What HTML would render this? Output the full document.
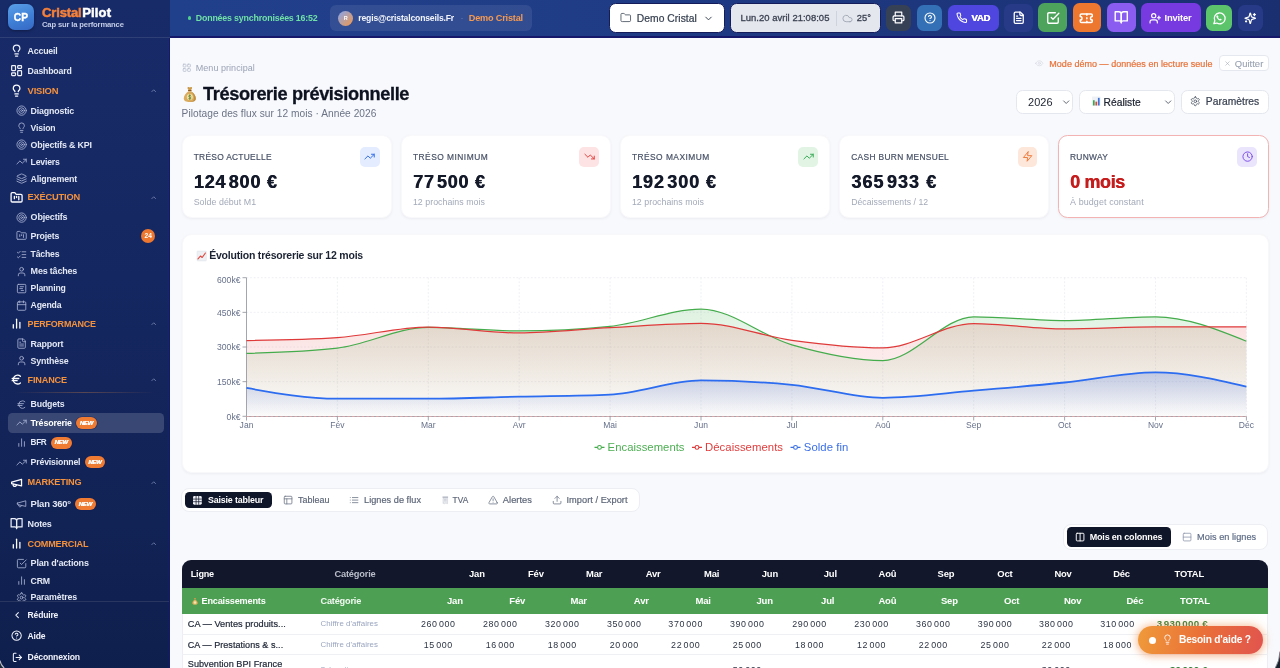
<!DOCTYPE html>
<html lang="fr"><head><meta charset="utf-8"><title>CristalPilot - Trésorerie prévisionnelle</title>
<style>
*{box-sizing:border-box;margin:0;padding:0}
html,body{width:1280px;height:668px;overflow:hidden;background:#f8f9fd;font-family:"Liberation Sans",sans-serif;}
#root{position:relative;width:1280px;height:668px;overflow:hidden;will-change:transform;}
.t{position:absolute;white-space:nowrap;display:block}
.i{position:absolute;display:block;overflow:visible}
.b{position:absolute}
</style></head><body><div id="root">
<div class="b" style="left:170.00px;top:0.00px;width:1110.00px;height:668.00px;background:#f8f9fd;"></div>
<div class="b" style="left:170.00px;top:0.00px;width:1110.00px;height:37.50px;background:linear-gradient(90deg,#21408c 0%,#1f3b85 45%,#1a2f70 100%);border-bottom:2px solid #15186b;"></div>
<div class="b" style="left:0.00px;top:0.00px;width:170.00px;height:668.00px;background:linear-gradient(180deg,#182b69 0%,#172a66 15%,#14265e 50%,#0f1f4d 100%);"></div>
<div class="b" style="left:0.00px;top:37.00px;width:170.00px;height:1.00px;background:rgba(255,255,255,.10);"></div>
<div class="b" style="left:169.30px;top:37.50px;width:0.90px;height:631.00px;background:#141a70;"></div>
<div class="b" style="left:7.50px;top:3.75px;width:26.50px;height:26.50px;border-radius:7px;background:linear-gradient(160deg,#5aa0e8 0%,#3f7fd6 55%,#3568c4 100%);box-shadow:0 1px 3px rgba(0,0,0,.35);"></div>
<span class="t" style="left:13.70px;top:3.00px;font-size:10.2px;line-height:30px;color:#ffffff;font-weight:700;letter-spacing:0.230px;-webkit-text-stroke:0.35px #fff;">CP</span>
<span class="t" style="left:42.00px;top:-3.00px;font-size:13px;line-height:30px;color:#f5813a;font-weight:700;letter-spacing:-0.143px;-webkit-text-stroke:0.5px #f5813a;transform:translateY(0.5px);">Cristal</span>
<span class="t" style="left:82.20px;top:-3.00px;font-size:13px;line-height:30px;color:#ffffff;font-weight:700;letter-spacing:0.159px;-webkit-text-stroke:0.5px #fff;transform:translateY(0.5px);">Pilot</span>
<span class="t" style="left:42.00px;top:10.00px;font-size:7.63px;line-height:30px;color:#c3cce6;font-weight:700;letter-spacing:-0.154px;">Cap sur la performance</span>
<div class="b" style="left:187.80px;top:16.20px;width:3.60px;height:3.60px;border-radius:50%;background:#4fd08b;"></div>
<span class="t" style="left:195.75px;top:3.00px;font-size:8.83px;line-height:30px;color:#6fe0a6;font-weight:700;letter-spacing:-0.177px;">Données synchronisées 16:52</span>
<div class="b" style="left:330.00px;top:5.00px;width:201.50px;height:25.50px;border-radius:6px;background:rgba(255,255,255,.085);"></div>
<div class="b" style="left:338.20px;top:10.50px;width:15.00px;height:15.00px;border-radius:50%;background:linear-gradient(135deg,#8fa4e0 10%,#e39a63 85%);"></div>
<span class="t" style="left:343.71px;top:3.00px;font-size:5.5px;line-height:30px;color:#ffffff;font-weight:700;">R</span>
<span class="t" style="left:358.30px;top:3.00px;font-size:8.62px;line-height:30px;color:#f1f4fb;font-weight:700;letter-spacing:-0.170px;">regis@cristalconseils.Fr</span>
<span class="t" style="left:460.50px;top:3.00px;font-size:9px;line-height:30px;color:#6f7fb5;">·</span>
<span class="t" style="left:468.80px;top:3.00px;font-size:9.13px;line-height:30px;color:#f59a52;font-weight:700;letter-spacing:-0.183px;">Demo Cristal</span>
<div class="b" style="left:608.80px;top:2.60px;width:116.00px;height:30.40px;border-radius:6.5px;background:#fff;border:1px solid #141c5a;"></div>
<svg class="i" style="left:619.50px;top:12.30px;" width="11.5" height="11.5" viewBox="0 0 24 24" fill="none" stroke="#4b5563" stroke-width="1.8" stroke-linecap="round" stroke-linejoin="round"><path d="M20 20a2 2 0 0 0 2-2V8a2 2 0 0 0-2-2h-7.900a2 2 0 0 1-1.690-.9L9.600 3.900A2 2 0 0 0 7.930 3H4a2 2 0 0 0-2 2v13a2 2 0 0 0 2 2Z"/></svg>
<span class="t" style="left:636.80px;top:4.00px;font-size:10.3px;line-height:30px;color:#374151;letter-spacing:0.044px;-webkit-text-stroke:0.22px #374151;">Demo Cristal</span>
<svg class="i" style="left:703.20px;top:12.80px;" width="11" height="11" viewBox="0 0 24 24" fill="none" stroke="#374151" stroke-width="2.1" stroke-linecap="round" stroke-linejoin="round"><path d="m6 9 6 6 6-6"/></svg>
<div class="b" style="left:730.20px;top:2.60px;width:151.00px;height:30.40px;border-radius:6.5px;background:#e5e7ee;border:1px solid #141c5a;"></div>
<span class="t" style="left:740.50px;top:3.00px;font-size:9.45px;line-height:30px;color:#3b4252;letter-spacing:0.037px;-webkit-text-stroke:0.3px #3b4252;">Lun.20 avril 21:08:05</span>
<div class="b" style="left:835.60px;top:10.50px;width:0.80px;height:15.00px;background:#cfd3dd;"></div>
<svg class="i" style="left:842.00px;top:12.60px;" width="11" height="11" viewBox="0 0 24 24" fill="none" stroke="#9aa1ae" stroke-width="1.8" stroke-linecap="round" stroke-linejoin="round"><path d="M17.500 19H9a7 7 0 1 1 6.710-9h1.790a4.500 4.500 0 1 1 0 9Z"/></svg>
<span class="t" style="left:856.80px;top:3.00px;font-size:9.34px;line-height:30px;color:#3b4252;letter-spacing:0.039px;-webkit-text-stroke:0.3px #3b4252;">25°</span>
<div class="b" style="left:885.50px;top:5.00px;width:25.50px;height:25.50px;border-radius:6.5px;background:#374155;"></div>
<svg class="i" style="left:891.70px;top:11.20px;" width="13" height="13" viewBox="0 0 24 24" fill="none" stroke="#fff" stroke-width="2.2" stroke-linecap="round" stroke-linejoin="round"><polyline points="6 9 6 2 18 2 18 9"/><path d="M6 18H4a2 2 0 0 1-2-2v-5a2 2 0 0 1 2-2h16a2 2 0 0 1 2 2v5a2 2 0 0 1-2 2h-2"/><rect width="12" height="8" x="6" y="14"/></svg>
<div class="b" style="left:916.80px;top:5.00px;width:25.70px;height:25.50px;border-radius:6.5px;background:#3470b6;"></div>
<svg class="i" style="left:923.60px;top:11.70px;" width="12" height="12" viewBox="0 0 24 24" fill="none" stroke="#fff" stroke-width="2.2" stroke-linecap="round" stroke-linejoin="round"><circle cx="12" cy="12" r="10"/><path d="M9.090 9a3 3 0 0 1 5.830 1c0 2-3 3-3 3"/><path d="M12 17h.01"/></svg>
<div class="b" style="left:948.00px;top:4.80px;width:50.80px;height:25.80px;border-radius:6.5px;background:#4f46e0;"></div>
<svg class="i" style="left:955.50px;top:12.00px;" width="11.5" height="11.5" viewBox="0 0 24 24" fill="none" stroke="#fff" stroke-width="2.2" stroke-linecap="round" stroke-linejoin="round"><path d="M22 16.920v3a2 2 0 0 1-2.180 2 19.790 19.790 0 0 1-8.630-3.070 19.500 19.500 0 0 1-6-6 19.790 19.790 0 0 1-3.070-8.670A2 2 0 0 1 4.110 2h3a2 2 0 0 1 2 1.720 12.840 12.840 0 0 0 .7 2.810 2 2 0 0 1-.45 2.110L8.090 9.910a16 16 0 0 0 6 6l1.270-1.270a2 2 0 0 1 2.110-.45 12.840 12.840 0 0 0 2.810.7A2 2 0 0 1 22 16.920z"/></svg>
<span class="t" style="left:971.30px;top:3.00px;font-size:9.51px;line-height:30px;color:#ffffff;font-weight:700;letter-spacing:-0.187px;text-shadow:0.4px 0 0 #fff;">VAD</span>
<div class="b" style="left:1004.20px;top:3.80px;width:28.40px;height:28.20px;border-radius:6.5px;background:#263a87;"></div>
<svg class="i" style="left:1011.60px;top:11.00px;" width="13.5" height="13.5" viewBox="0 0 24 24" fill="none" stroke="#fff" stroke-width="2.3" stroke-linecap="round" stroke-linejoin="round"><path d="M15 2H6a2 2 0 0 0-2 2v16a2 2 0 0 0 2 2h12a2 2 0 0 0 2-2V7Z"/><path d="M14 2v4a2 2 0 0 0 2 2h4"/><path d="M10 9H8"/><path d="M16 13H8"/><path d="M16 17H8"/></svg>
<div class="b" style="left:1038.20px;top:3.40px;width:28.80px;height:28.80px;border-radius:6.5px;background:#4ea35c;"></div>
<svg class="i" style="left:1045.60px;top:10.80px;" width="14" height="14" viewBox="0 0 24 24" fill="none" stroke="#fff" stroke-width="2.3" stroke-linecap="round" stroke-linejoin="round"><path d="m9 11 3 3L22 4"/><path d="M21 12v7a2 2 0 0 1-2 2H5a2 2 0 0 1-2-2V5a2 2 0 0 1 2-2h11"/></svg>
<div class="b" style="left:1072.50px;top:3.40px;width:28.80px;height:28.80px;border-radius:6.5px;background:#ee7730;"></div>
<svg class="i" style="left:1079.40px;top:10.80px;" width="14.5" height="14.5" viewBox="0 0 24 24" fill="none" stroke="#fff" stroke-width="2.4" stroke-linecap="round" stroke-linejoin="round"><path d="M2 9a3 3 0 0 1 0 6v2a2 2 0 0 0 2 2h16a2 2 0 0 0 2-2v-2a3 3 0 0 1 0-6V7a2 2 0 0 0-2-2H4a2 2 0 0 0-2 2Z"/><path d="M13 5v2"/><path d="M13 17v2"/><path d="M13 11v2"/></svg>
<div class="b" style="left:1106.70px;top:3.40px;width:28.90px;height:28.80px;border-radius:6.5px;background:#8b5cf0;"></div>
<svg class="i" style="left:1113.60px;top:10.30px;" width="14.5" height="14.5" viewBox="0 0 24 24" fill="none" stroke="#fff" stroke-width="2.3" stroke-linecap="round" stroke-linejoin="round"><path d="M2 3h6a4 4 0 0 1 4 4v14a3 3 0 0 0-3-3H2z"/><path d="M22 3h-6a4 4 0 0 0-4 4v14a3 3 0 0 1 3-3h7z"/></svg>
<div class="b" style="left:1140.70px;top:3.40px;width:59.90px;height:28.80px;border-radius:6.5px;background:#763ae0;"></div>
<svg class="i" style="left:1149.00px;top:11.70px;" width="12.5" height="12.5" viewBox="0 0 24 24" fill="none" stroke="#fff" stroke-width="2.2" stroke-linecap="round" stroke-linejoin="round"><path d="M16 21v-2a4 4 0 0 0-4-4H6a4 4 0 0 0-4 4v2"/><circle cx="9" cy="7" r="4"/><line x1="19" x2="19" y1="8" y2="14"/><line x1="22" x2="16" y1="11" y2="11"/></svg>
<span class="t" style="left:1164.60px;top:3.00px;font-size:9.37px;line-height:30px;color:#ffffff;font-weight:700;letter-spacing:-0.186px;">Inviter</span>
<div class="b" style="left:1206.20px;top:5.00px;width:25.90px;height:25.50px;border-radius:6.5px;background:#5cc56b;"></div>
<svg class="i" style="left:1211.9px;top:10.5px" width="14.5" height="14.5" viewBox="0 0 24 24" fill="none" stroke="#fff" stroke-width="2.1" stroke-linecap="round" stroke-linejoin="round"><path d="M3 21l1.650-4.800A9 9 0 1 1 8 19.900L3 21z"/><path fill="#fff" stroke="none" d="M9.200 7.400c-.3-.5-.9-.5-1.300-.1-.7.700-1 1.600-.6 2.700.9 2.600 3.100 4.800 5.700 5.700 1.100.4 2 .1 2.700-.6.400-.4.400-1-.1-1.300l-1.400-.9c-.4-.2-.8-.2-1.100.1l-.5.500c-1.100-.5-2.100-1.500-2.600-2.600l.5-.5c.3-.3.300-.7.100-1.100z"/></svg>
<div class="b" style="left:1237.50px;top:5.00px;width:25.60px;height:25.50px;border-radius:6.5px;background:#263a87;"></div>
<svg class="i" style="left:1244.20px;top:11.60px;" width="12.5" height="12.5" viewBox="0 0 24 24" fill="none" stroke="#fff" stroke-width="2.3" stroke-linecap="round" stroke-linejoin="round"><path d="M9.937 15.500A2 2 0 0 0 8.500 14.063l-6.135-1.582a.500.500 0 0 1 0-.962L8.500 9.936A2 2 0 0 0 9.937 8.500l1.582-6.135a.500.500 0 0 1 .963 0L14.063 8.500A2 2 0 0 0 15.500 9.937l6.135 1.581a.500.500 0 0 1 0 .964L15.500 14.063a2 2 0 0 0-1.437 1.437l-1.582 6.135a.500.500 0 0 1-.963 0z"/><path d="M20 3v4"/><path d="M22 5h-4"/><path d="M4 17v2"/><path d="M5 18H3"/></svg>
<svg class="i" style="left:10.00px;top:44.10px;" width="13.2" height="13.2" viewBox="0 0 24 24" fill="none" stroke="#eef1fa" stroke-width="2.2" stroke-linecap="round" stroke-linejoin="round"><path d="M15 14c.2-1 .7-1.700 1.500-2.500 1-.9 1.500-2.200 1.500-3.500A6 6 0 0 0 6 8c0 1 .2 2.200 1.500 3.500.7.700 1.300 1.500 1.500 2.500"/><path d="M9 18h6"/><path d="M10 22h4"/></svg>
<span class="t" style="left:27.60px;top:36.00px;font-size:8.79px;line-height:30px;color:#e3e8f4;font-weight:700;letter-spacing:-0.177px;">Accueil</span>
<svg class="i" style="left:10.00px;top:64.00px;" width="13.2" height="13.2" viewBox="0 0 24 24" fill="none" stroke="#eef1fa" stroke-width="2.2" stroke-linecap="round" stroke-linejoin="round"><rect width="7" height="9" x="3" y="3" rx="1"/><rect width="7" height="5" x="14" y="3" rx="1"/><rect width="7" height="9" x="14" y="12" rx="1"/><rect width="7" height="5" x="3" y="16" rx="1"/></svg>
<span class="t" style="left:27.60px;top:56.00px;font-size:8.73px;line-height:30px;color:#e3e8f4;font-weight:700;letter-spacing:-0.174px;">Dashboard</span>
<svg class="i" style="left:10.00px;top:83.90px;" width="13.2" height="13.2" viewBox="0 0 24 24" fill="none" stroke="#fdfdff" stroke-width="2.35" stroke-linecap="round" stroke-linejoin="round"><path d="M15 14c.2-1 .7-1.700 1.500-2.500 1-.9 1.500-2.200 1.500-3.500A6 6 0 0 0 6 8c0 1 .2 2.200 1.500 3.500.7.700 1.300 1.500 1.500 2.500"/><path d="M9 18h6"/><path d="M10 22h4"/></svg>
<span class="t" style="left:27.60px;top:76.00px;font-size:9.42px;line-height:30px;color:#f5923e;font-weight:700;letter-spacing:-0.186px;">VISION</span>
<svg class="i" style="left:150.20px;top:86.80px;" width="7.4" height="7.4" viewBox="0 0 24 24" fill="none" stroke="#8f9cc6" stroke-width="2.2" stroke-linecap="round" stroke-linejoin="round"><path d="m18 15-6-6-6 6"/></svg>
<svg class="i" style="left:15.60px;top:105.30px;" width="11.2" height="11.2" viewBox="0 0 24 24" fill="none" stroke="#aab4d4" stroke-width="1.8" stroke-linecap="round" stroke-linejoin="round"><circle cx="12" cy="12" r="10"/><circle cx="12" cy="12" r="6"/><circle cx="12" cy="12" r="2"/></svg>
<span class="t" style="left:30.60px;top:96.00px;font-size:8.82px;line-height:30px;color:#e3e8f4;font-weight:700;letter-spacing:-0.176px;">Diagnostic</span>
<svg class="i" style="left:15.60px;top:122.40px;" width="11.2" height="11.2" viewBox="0 0 24 24" fill="none" stroke="#aab4d4" stroke-width="1.8" stroke-linecap="round" stroke-linejoin="round"><path d="M15 14c.2-1 .7-1.700 1.500-2.500 1-.9 1.500-2.200 1.500-3.500A6 6 0 0 0 6 8c0 1 .2 2.200 1.500 3.500.7.700 1.300 1.500 1.500 2.500"/><path d="M9 18h6"/><path d="M10 22h4"/></svg>
<span class="t" style="left:30.60px;top:113.00px;font-size:8.67px;line-height:30px;color:#e3e8f4;font-weight:700;letter-spacing:-0.171px;">Vision</span>
<svg class="i" style="left:15.60px;top:139.10px;" width="11.2" height="11.2" viewBox="0 0 24 24" fill="none" stroke="#aab4d4" stroke-width="1.8" stroke-linecap="round" stroke-linejoin="round"><circle cx="12" cy="12" r="10"/><circle cx="12" cy="12" r="6"/><circle cx="12" cy="12" r="2"/></svg>
<span class="t" style="left:30.60px;top:130.00px;font-size:8.86px;line-height:30px;color:#e3e8f4;font-weight:700;letter-spacing:-0.178px;">Objectifs &amp; KPI</span>
<svg class="i" style="left:15.60px;top:156.20px;" width="11.2" height="11.2" viewBox="0 0 24 24" fill="none" stroke="#aab4d4" stroke-width="1.8" stroke-linecap="round" stroke-linejoin="round"><polyline points="22 7 13.500 15.500 8.500 10.500 2 17"/><polyline points="16 7 22 7 22 13"/></svg>
<span class="t" style="left:30.60px;top:147.00px;font-size:8.66px;line-height:30px;color:#e3e8f4;font-weight:700;letter-spacing:-0.171px;">Leviers</span>
<svg class="i" style="left:15.60px;top:173.40px;" width="11.2" height="11.2" viewBox="0 0 24 24" fill="none" stroke="#aab4d4" stroke-width="1.8" stroke-linecap="round" stroke-linejoin="round"><path d="m12.830 2.180a2 2 0 0 0-1.660 0L2.600 6.080a1 1 0 0 0 0 1.830l8.580 3.910a2 2 0 0 0 1.660 0l8.580-3.900a1 1 0 0 0 0-1.830Z"/><path d="m22 17.650-9.170 4.160a2 2 0 0 1-1.660 0L2 17.650"/><path d="m22 12.650-9.170 4.160a2 2 0 0 1-1.660 0L2 12.650"/></svg>
<span class="t" style="left:30.60px;top:164.00px;font-size:8.85px;line-height:30px;color:#e3e8f4;font-weight:700;letter-spacing:-0.176px;">Alignement</span>
<svg class="i" style="left:10.00px;top:190.60px;" width="13.2" height="13.2" viewBox="0 0 24 24" fill="none" stroke="#fdfdff" stroke-width="2.35" stroke-linecap="round" stroke-linejoin="round"><path d="M4 20h16a2 2 0 0 0 2-2V8a2 2 0 0 0-2-2h-7.930a2 2 0 0 1-1.660-.9l-.820-1.200A2 2 0 0 0 7.930 3H4a2 2 0 0 0-2 2v13c0 1.100.9 2 2 2Z"/><path d="M8 10v4"/><path d="M12 10v2"/><path d="M16 10v6"/></svg>
<span class="t" style="left:27.60px;top:182.00px;font-size:9.25px;line-height:30px;color:#f5923e;font-weight:700;letter-spacing:-0.183px;">EXÉCUTION</span>
<svg class="i" style="left:150.20px;top:193.50px;" width="7.4" height="7.4" viewBox="0 0 24 24" fill="none" stroke="#8f9cc6" stroke-width="2.2" stroke-linecap="round" stroke-linejoin="round"><path d="m18 15-6-6-6 6"/></svg>
<svg class="i" style="left:15.60px;top:211.80px;" width="11.2" height="11.2" viewBox="0 0 24 24" fill="none" stroke="#aab4d4" stroke-width="1.8" stroke-linecap="round" stroke-linejoin="round"><circle cx="12" cy="12" r="10"/><circle cx="12" cy="12" r="6"/><circle cx="12" cy="12" r="2"/></svg>
<span class="t" style="left:30.60px;top:202.00px;font-size:8.98px;line-height:30px;color:#e3e8f4;font-weight:700;letter-spacing:-0.178px;">Objectifs</span>
<svg class="i" style="left:15.60px;top:230.00px;" width="11.2" height="11.2" viewBox="0 0 24 24" fill="none" stroke="#aab4d4" stroke-width="1.8" stroke-linecap="round" stroke-linejoin="round"><path d="M4 20h16a2 2 0 0 0 2-2V8a2 2 0 0 0-2-2h-7.930a2 2 0 0 1-1.660-.9l-.820-1.200A2 2 0 0 0 7.930 3H4a2 2 0 0 0-2 2v13c0 1.100.9 2 2 2Z"/><path d="M8 10v4"/><path d="M12 10v2"/><path d="M16 10v6"/></svg>
<span class="t" style="left:30.60px;top:221.00px;font-size:8.81px;line-height:30px;color:#e3e8f4;font-weight:700;letter-spacing:-0.178px;">Projets</span>
<div class="b" style="left:141.00px;top:228.50px;width:14.30px;height:14.30px;border-radius:50%;background:#ee7730;"></div>
<span class="t" style="left:144.48px;top:221.00px;font-size:6.6px;line-height:30px;color:#ffffff;font-weight:700;">24</span>
<svg class="i" style="left:15.60px;top:248.70px;" width="11.2" height="11.2" viewBox="0 0 24 24" fill="none" stroke="#aab4d4" stroke-width="1.8" stroke-linecap="round" stroke-linejoin="round"><path d="m3 17 2 2 4-4"/><path d="m3 7 2 2 4-4"/><path d="M13 6h8"/><path d="M13 12h8"/><path d="M13 18h8"/></svg>
<span class="t" style="left:30.60px;top:239.00px;font-size:8.67px;line-height:30px;color:#e3e8f4;font-weight:700;letter-spacing:-0.175px;">Tâches</span>
<svg class="i" style="left:15.60px;top:265.70px;" width="11.2" height="11.2" viewBox="0 0 24 24" fill="none" stroke="#aab4d4" stroke-width="1.8" stroke-linecap="round" stroke-linejoin="round"><path d="M19 21v-2a4 4 0 0 0-4-4H9a4 4 0 0 0-4 4v2"/><circle cx="12" cy="7" r="4"/></svg>
<span class="t" style="left:30.60px;top:256.00px;font-size:8.98px;line-height:30px;color:#e3e8f4;font-weight:700;letter-spacing:-0.179px;">Mes tâches</span>
<svg class="i" style="left:15.60px;top:282.90px;" width="11.2" height="11.2" viewBox="0 0 24 24" fill="none" stroke="#aab4d4" stroke-width="1.8" stroke-linecap="round" stroke-linejoin="round"><rect width="18" height="18" x="3" y="3" rx="2"/><path d="M9 8h7"/><path d="M8 12h6"/><path d="M11 16h5"/></svg>
<span class="t" style="left:30.60px;top:273.00px;font-size:8.65px;line-height:30px;color:#e3e8f4;font-weight:700;letter-spacing:-0.174px;">Planning</span>
<svg class="i" style="left:15.60px;top:299.90px;" width="11.2" height="11.2" viewBox="0 0 24 24" fill="none" stroke="#aab4d4" stroke-width="1.8" stroke-linecap="round" stroke-linejoin="round"><path d="M8 2v4"/><path d="M16 2v4"/><rect width="18" height="18" x="3" y="4" rx="2"/><path d="M3 10h18"/></svg>
<span class="t" style="left:30.60px;top:290.00px;font-size:8.69px;line-height:30px;color:#e3e8f4;font-weight:700;letter-spacing:-0.173px;">Agenda</span>
<svg class="i" style="left:10.00px;top:317.10px;" width="13.2" height="13.2" viewBox="0 0 24 24" fill="none" stroke="#fdfdff" stroke-width="2.35" stroke-linecap="round" stroke-linejoin="round"><line x1="18" x2="18" y1="20" y2="10"/><line x1="12" x2="12" y1="20" y2="4"/><line x1="6" x2="6" y1="20" y2="14"/></svg>
<span class="t" style="left:27.60px;top:309.00px;font-size:8.97px;line-height:30px;color:#f5923e;font-weight:700;letter-spacing:-0.177px;">PERFORMANCE</span>
<svg class="i" style="left:150.20px;top:320.00px;" width="7.4" height="7.4" viewBox="0 0 24 24" fill="none" stroke="#8f9cc6" stroke-width="2.2" stroke-linecap="round" stroke-linejoin="round"><path d="m18 15-6-6-6 6"/></svg>
<svg class="i" style="left:15.60px;top:338.00px;" width="11.2" height="11.2" viewBox="0 0 24 24" fill="none" stroke="#aab4d4" stroke-width="1.8" stroke-linecap="round" stroke-linejoin="round"><path d="M15 2H6a2 2 0 0 0-2 2v16a2 2 0 0 0 2 2h12a2 2 0 0 0 2-2V7Z"/><path d="M14 2v4a2 2 0 0 0 2 2h4"/><path d="M10 9H8"/><path d="M16 13H8"/><path d="M16 17H8"/></svg>
<span class="t" style="left:30.60px;top:329.00px;font-size:8.89px;line-height:30px;color:#e3e8f4;font-weight:700;letter-spacing:-0.179px;">Rapport</span>
<svg class="i" style="left:15.60px;top:355.30px;" width="11.2" height="11.2" viewBox="0 0 24 24" fill="none" stroke="#aab4d4" stroke-width="1.8" stroke-linecap="round" stroke-linejoin="round"><path d="M19 21v-2a4 4 0 0 0-4-4H9a4 4 0 0 0-4 4v2"/><circle cx="12" cy="7" r="4"/></svg>
<span class="t" style="left:30.60px;top:346.00px;font-size:8.83px;line-height:30px;color:#e3e8f4;font-weight:700;letter-spacing:-0.180px;">Synthèse</span>
<svg class="i" style="left:10.00px;top:372.90px;" width="13.2" height="13.2" viewBox="0 0 24 24" fill="none" stroke="#fdfdff" stroke-width="2.35" stroke-linecap="round" stroke-linejoin="round"><path d="M4 10h12"/><path d="M4 14h9"/><path d="M19 6a7.700 7.700 0 0 0-5.200-2A7.900 7.900 0 0 0 6 12c0 4.400 3.500 8 7.800 8 2 0 3.800-.8 5.200-2"/></svg>
<span class="t" style="left:27.60px;top:365.00px;font-size:9.13px;line-height:30px;color:#f5923e;font-weight:700;letter-spacing:-0.180px;">FINANCE</span>
<svg class="i" style="left:150.20px;top:375.80px;" width="7.4" height="7.4" viewBox="0 0 24 24" fill="none" stroke="#8f9cc6" stroke-width="2.2" stroke-linecap="round" stroke-linejoin="round"><path d="m18 15-6-6-6 6"/></svg>
<div class="b" style="left:14.00px;top:392.00px;width:141.00px;height:0.90px;background:linear-gradient(90deg,rgba(245,146,62,0) 0%,rgba(245,146,62,.30) 50%,rgba(245,146,62,0) 100%);"></div>
<svg class="i" style="left:15.60px;top:398.70px;" width="11.2" height="11.2" viewBox="0 0 24 24" fill="none" stroke="#aab4d4" stroke-width="1.8" stroke-linecap="round" stroke-linejoin="round"><path d="M4 10h12"/><path d="M4 14h9"/><path d="M19 6a7.700 7.700 0 0 0-5.200-2A7.900 7.900 0 0 0 6 12c0 4.400 3.500 8 7.800 8 2 0 3.800-.8 5.200-2"/></svg>
<span class="t" style="left:30.60px;top:389.00px;font-size:8.76px;line-height:30px;color:#e3e8f4;font-weight:700;letter-spacing:-0.173px;">Budgets</span>
<div class="b" style="left:8.00px;top:412.60px;width:155.70px;height:20.40px;border-radius:4.5px;background:rgba(255,255,255,.16);"></div>
<svg class="i" style="left:15.60px;top:417.00px;" width="11.2" height="11.2" viewBox="0 0 24 24" fill="none" stroke="#aab4d4" stroke-width="1.8" stroke-linecap="round" stroke-linejoin="round"><polyline points="22 7 13.500 15.500 8.500 10.500 2 17"/><polyline points="16 7 22 7 22 13"/></svg>
<span class="t" style="left:30.60px;top:408.00px;font-size:8.89px;line-height:30px;color:#ffffff;font-weight:700;letter-spacing:-0.177px;">Trésorerie</span>
<div class="b" style="left:76.30px;top:416.70px;width:20.60px;height:12.20px;border-radius:6.1px;background:#ef7a32;box-shadow:0 0 0 0.6px rgba(20,30,90,.55);"></div>
<span class="t" style="left:79.70px;top:408.00px;font-size:6.1px;line-height:30px;color:#ffffff;font-weight:700;font-style:italic;letter-spacing:-0.316px;text-shadow:0.3px 0 0 #fff;">NEW</span>
<svg class="i" style="left:15.60px;top:436.80px;" width="11.2" height="11.2" viewBox="0 0 24 24" fill="none" stroke="#aab4d4" stroke-width="1.8" stroke-linecap="round" stroke-linejoin="round"><line x1="18" x2="18" y1="20" y2="10"/><line x1="12" x2="12" y1="20" y2="4"/><line x1="6" x2="6" y1="20" y2="14"/></svg>
<span class="t" style="left:30.60px;top:428.00px;font-size:8.19px;line-height:30px;color:#e3e8f4;font-weight:700;letter-spacing:-0.316px;">BFR</span>
<div class="b" style="left:51.00px;top:436.50px;width:20.60px;height:12.20px;border-radius:6.1px;background:#ef7a32;box-shadow:0 0 0 0.6px rgba(20,30,90,.55);"></div>
<span class="t" style="left:54.40px;top:427.00px;font-size:6.1px;line-height:30px;color:#ffffff;font-weight:700;font-style:italic;letter-spacing:-0.316px;text-shadow:0.3px 0 0 #fff;">NEW</span>
<svg class="i" style="left:15.60px;top:456.60px;" width="11.2" height="11.2" viewBox="0 0 24 24" fill="none" stroke="#aab4d4" stroke-width="1.8" stroke-linecap="round" stroke-linejoin="round"><polyline points="22 7 13.500 15.500 8.500 10.500 2 17"/><polyline points="16 7 22 7 22 13"/></svg>
<span class="t" style="left:30.60px;top:447.00px;font-size:8.73px;line-height:30px;color:#e3e8f4;font-weight:700;letter-spacing:-0.174px;">Prévisionnel</span>
<div class="b" style="left:84.80px;top:456.30px;width:20.60px;height:12.20px;border-radius:6.1px;background:#ef7a32;box-shadow:0 0 0 0.6px rgba(20,30,90,.55);"></div>
<span class="t" style="left:88.20px;top:447.00px;font-size:6.1px;line-height:30px;color:#ffffff;font-weight:700;font-style:italic;letter-spacing:-0.316px;text-shadow:0.3px 0 0 #fff;">NEW</span>
<svg class="i" style="left:10.00px;top:475.70px;" width="13.2" height="13.2" viewBox="0 0 24 24" fill="none" stroke="#fdfdff" stroke-width="2.35" stroke-linecap="round" stroke-linejoin="round"><path d="m3 11 18-5v12L3 14v-3z"/><path d="M11.600 16.800a3 3 0 1 1-5.800-1.600"/></svg>
<span class="t" style="left:27.60px;top:467.00px;font-size:9.16px;line-height:30px;color:#f5923e;font-weight:700;letter-spacing:-0.183px;">MARKETING</span>
<svg class="i" style="left:150.20px;top:478.60px;" width="7.4" height="7.4" viewBox="0 0 24 24" fill="none" stroke="#8f9cc6" stroke-width="2.2" stroke-linecap="round" stroke-linejoin="round"><path d="m18 15-6-6-6 6"/></svg>
<svg class="i" style="left:15.60px;top:498.20px;" width="11.2" height="11.2" viewBox="0 0 24 24" fill="none" stroke="#aab4d4" stroke-width="1.8" stroke-linecap="round" stroke-linejoin="round"><path d="m3 11 18-5v12L3 14v-3z"/><path d="M11.600 16.800a3 3 0 1 1-5.800-1.600"/></svg>
<span class="t" style="left:30.60px;top:489.00px;font-size:9.42px;line-height:30px;color:#e3e8f4;font-weight:700;letter-spacing:-0.186px;">Plan 360°</span>
<div class="b" style="left:75.20px;top:497.90px;width:20.60px;height:12.20px;border-radius:6.1px;background:#ef7a32;box-shadow:0 0 0 0.6px rgba(20,30,90,.55);"></div>
<span class="t" style="left:78.60px;top:489.00px;font-size:6.1px;line-height:30px;color:#ffffff;font-weight:700;font-style:italic;letter-spacing:-0.316px;text-shadow:0.3px 0 0 #fff;">NEW</span>
<svg class="i" style="left:10.00px;top:517.00px;" width="13.2" height="13.2" viewBox="0 0 24 24" fill="none" stroke="#eef1fa" stroke-width="2.2" stroke-linecap="round" stroke-linejoin="round"><path d="M2 3h6a4 4 0 0 1 4 4v14a3 3 0 0 0-3-3H2z"/><path d="M22 3h-6a4 4 0 0 0-4 4v14a3 3 0 0 1 3-3h7z"/></svg>
<span class="t" style="left:27.60px;top:509.00px;font-size:8.97px;line-height:30px;color:#e3e8f4;font-weight:700;letter-spacing:-0.180px;">Notes</span>
<svg class="i" style="left:10.00px;top:536.80px;" width="13.2" height="13.2" viewBox="0 0 24 24" fill="none" stroke="#fdfdff" stroke-width="2.35" stroke-linecap="round" stroke-linejoin="round"><line x1="18" x2="18" y1="20" y2="10"/><line x1="12" x2="12" y1="20" y2="4"/><line x1="6" x2="6" y1="20" y2="14"/></svg>
<span class="t" style="left:27.60px;top:529.00px;font-size:9.09px;line-height:30px;color:#f5923e;font-weight:700;letter-spacing:-0.179px;">COMMERCIAL</span>
<svg class="i" style="left:150.20px;top:539.70px;" width="7.4" height="7.4" viewBox="0 0 24 24" fill="none" stroke="#8f9cc6" stroke-width="2.2" stroke-linecap="round" stroke-linejoin="round"><path d="m18 15-6-6-6 6"/></svg>
<svg class="i" style="left:15.60px;top:557.80px;" width="11.2" height="11.2" viewBox="0 0 24 24" fill="none" stroke="#aab4d4" stroke-width="1.8" stroke-linecap="round" stroke-linejoin="round"><path d="m9 11 3 3L22 4"/><path d="M21 12v7a2 2 0 0 1-2 2H5a2 2 0 0 1-2-2V5a2 2 0 0 1 2-2h11"/></svg>
<span class="t" style="left:30.60px;top:548.00px;font-size:9.0px;line-height:30px;color:#e3e8f4;font-weight:700;letter-spacing:-0.181px;">Plan d'actions</span>
<svg class="i" style="left:15.60px;top:575.00px;" width="11.2" height="11.2" viewBox="0 0 24 24" fill="none" stroke="#aab4d4" stroke-width="1.8" stroke-linecap="round" stroke-linejoin="round"><line x1="18" x2="18" y1="20" y2="10"/><line x1="12" x2="12" y1="20" y2="4"/><line x1="6" x2="6" y1="20" y2="14"/></svg>
<span class="t" style="left:30.60px;top:566.00px;font-size:8.72px;line-height:30px;color:#e3e8f4;font-weight:700;letter-spacing:-0.179px;">CRM</span>
<svg class="i" style="left:15.60px;top:591.90px;" width="11.2" height="11.2" viewBox="0 0 24 24" fill="none" stroke="#aab4d4" stroke-width="1.8" stroke-linecap="round" stroke-linejoin="round"><path d="M12.220 2h-.44a2 2 0 0 0-2 2v.180a2 2 0 0 1-1 1.730l-.430.250a2 2 0 0 1-2 0l-.150-.080a2 2 0 0 0-2.730.730l-.220.380a2 2 0 0 0 .730 2.730l.150.100a2 2 0 0 1 1 1.720v.510a2 2 0 0 1-1 1.740l-.150.090a2 2 0 0 0-.730 2.730l.220.380a2 2 0 0 0 2.730.730l.150-.080a2 2 0 0 1 2 0l.430.250a2 2 0 0 1 1 1.730V20a2 2 0 0 0 2 2h.440a2 2 0 0 0 2-2v-.180a2 2 0 0 1 1-1.730l.430-.250a2 2 0 0 1 2 0l.150.080a2 2 0 0 0 2.730-.730l.220-.390a2 2 0 0 0-.730-2.730l-.150-.080a2 2 0 0 1-1-1.740v-.500a2 2 0 0 1 1-1.740l.150-.090a2 2 0 0 0 .730-2.730l-.220-.380a2 2 0 0 0-2.730-.730l-.150.080a2 2 0 0 1-2 0l-.430-.250a2 2 0 0 1-1-1.730V4a2 2 0 0 0-2-2z"/><circle cx="12" cy="12" r="3"/></svg>
<span class="t" style="left:30.60px;top:582.00px;font-size:8.83px;line-height:30px;color:#e3e8f4;font-weight:700;letter-spacing:-0.179px;">Paramètres</span>
<div class="b" style="left:0.00px;top:600.50px;width:169.30px;height:67.50px;background:linear-gradient(180deg,#102050 0%,#0f1f4d 100%);border-top:1px solid rgba(255,255,255,.11);"></div>
<svg class="i" style="left:11.80px;top:610.00px;" width="10.2" height="10.2" viewBox="0 0 24 24" fill="none" stroke="#f2f4fb" stroke-width="2.4" stroke-linecap="round" stroke-linejoin="round"><path d="m15 18-6-6 6-6"/></svg>
<span class="t" style="left:27.60px;top:600.00px;font-size:8.52px;line-height:30px;color:#f2f4fb;font-weight:700;letter-spacing:-0.170px;">Réduire</span>
<svg class="i" style="left:11.20px;top:630.40px;" width="11.2" height="11.2" viewBox="0 0 24 24" fill="none" stroke="#f2f4fb" stroke-width="2.2" stroke-linecap="round" stroke-linejoin="round"><circle cx="12" cy="12" r="10"/><path d="M9.090 9a3 3 0 0 1 5.830 1c0 2-3 3-3 3"/><path d="M12 17h.01"/></svg>
<span class="t" style="left:27.60px;top:621.00px;font-size:8.54px;line-height:30px;color:#f2f4fb;font-weight:700;letter-spacing:-0.168px;">Aide</span>
<svg class="i" style="left:11.60px;top:652.00px;" width="10.8" height="10.8" viewBox="0 0 24 24" fill="none" stroke="#f2f4fb" stroke-width="2.3" stroke-linecap="round" stroke-linejoin="round"><path d="M9 21H5a2 2 0 0 1-2-2V5a2 2 0 0 1 2-2h4"/><polyline points="16 17 21 12 16 7"/><line x1="21" x2="9" y1="12" y2="12"/></svg>
<span class="t" style="left:27.60px;top:642.00px;font-size:8.64px;line-height:30px;color:#f2f4fb;font-weight:700;letter-spacing:-0.174px;">Déconnexion</span>
<svg class="i" style="left:181.60px;top:63.00px;" width="9.6" height="9.6" viewBox="0 0 24 24" fill="none" stroke="#b4bccb" stroke-width="1.9" stroke-linecap="round" stroke-linejoin="round"><rect width="7" height="7" x="3" y="3" rx="1.500"/><rect width="7" height="7" x="14" y="3" rx="1.500"/><rect width="7" height="7" x="14" y="14" rx="1.500"/><rect width="7" height="7" x="3" y="14" rx="1.500"/></svg>
<span class="t" style="left:195.80px;top:53.00px;font-size:9.0px;line-height:30px;color:#9aa3b5;letter-spacing:0.036px;">Menu principal</span>
<svg class="i" style="left:1034.80px;top:59.20px;" width="8.6" height="8.6" viewBox="0 0 24 24" fill="none" stroke="#d3d7e0" stroke-width="1.8" stroke-linecap="round" stroke-linejoin="round"><path d="M2 12s3-7 10-7 10 7 10 7-3 7-10 7-10-7-10-7Z"/><circle cx="12" cy="12" r="3"/></svg>
<span class="t" style="left:1049.30px;top:49.00px;font-size:8.99px;line-height:30px;color:#e8743b;letter-spacing:0.037px;-webkit-text-stroke:0.22px #e8743b;">Mode démo — données en lecture seule</span>
<div class="b" style="left:1218.60px;top:55.20px;width:50.10px;height:16.20px;border-radius:4px;background:#fff;border:1px solid #e6e8ef;"></div>
<svg class="i" style="left:1224.30px;top:59.90px;" width="7" height="7" viewBox="0 0 24 24" fill="none" stroke="#a3abb9" stroke-width="2" stroke-linecap="round" stroke-linejoin="round"><path d="M18 6 6 18"/><path d="m6 6 12 12"/></svg>
<span class="t" style="left:1234.80px;top:49.00px;font-size:9.42px;line-height:30px;color:#9aa3b2;letter-spacing:0.039px;-webkit-text-stroke:0.12px #9aa3b2;">Quitter</span>
<svg class="i" style="left:183.2px;top:85.6px" width="13.6" height="16.6" viewBox="0 0 27 33">
<path d="M9.500 2.500c1.500-1 3-.3 4 .5 1-.8 2.500-1.500 4-.5 1 .7.600 2-.2 3.300L16 8h-5L9.700 5.800C8.900 4.500 8.500 3.200 9.500 2.500z" fill="#c99a4a"/>
<path d="M10.500 8h6c.8 0 1 .8.500 1.300L16 10.500h-5L10 9.300C9.500 8.800 9.700 8 10.500 8z" fill="#8a5a22"/>
<path d="M11 10.500h5c5.500 3.500 9.500 9 9.500 14.500 0 5-4.500 7-12 7s-12-2-12-7c0-5.500 4-11 9.500-14.500z" fill="#d9ab5e"/>
<path d="M16 10.500c5.500 3.500 9.500 9 9.500 14.500 0 5-4.500 7-12 7 6-1 8.500-3.500 8.500-8 0-5-2.500-9.500-6-13.500z" fill="#c08f44"/>
<circle cx="13.500" cy="22" r="6" fill="#f3e3a6"/>
<path d="M15.800 19.800c-.5-.8-1.300-1.200-2.300-1.200-1.400 0-2.400.7-2.400 1.800 0 2.400 4.900 1.100 4.900 3.500 0 1.100-1 1.800-2.500 1.800-1.100 0-2-.4-2.600-1.300M13.500 17.300v9.400" stroke="#5b7a2e" stroke-width="1.500" fill="none" stroke-linecap="round"/>
</svg>
<span class="t" style="left:203.00px;top:79.00px;font-size:18.18px;line-height:30px;color:#0d1220;font-weight:700;letter-spacing:-0.363px;-webkit-text-stroke:0.3px #0d1220;">Trésorerie prévisionnelle</span>
<span class="t" style="left:181.60px;top:99.00px;font-size:10.17px;line-height:30px;color:#6b7385;letter-spacing:0.041px;">Pilotage des flux sur 12 mois · Année 2026</span>
<div class="b" style="left:1015.80px;top:89.80px;width:57.70px;height:23.90px;border-radius:6.5px;background:#fff;border:1px solid #e4e7ee;"></div>
<span class="t" style="left:1028.00px;top:87.00px;font-size:10.96px;line-height:30px;color:#1c2230;letter-spacing:0.040px;">2026</span>
<svg class="i" style="left:1061.40px;top:96.80px;" width="10.4" height="10.4" viewBox="0 0 24 24" fill="none" stroke="#4a5160" stroke-width="2" stroke-linecap="round" stroke-linejoin="round"><path d="m6 9 6 6 6-6"/></svg>
<div class="b" style="left:1079.00px;top:89.80px;width:96.00px;height:23.90px;border-radius:6.5px;background:#fff;border:1px solid #e4e7ee;"></div>
<svg class="i" style="left:1091.5px;top:96.2px" width="8.6" height="10.4" viewBox="0 0 18 20"><rect x="0" y="0" width="18" height="20" rx="1.500" fill="#eef1f6"/><rect x="2" y="8" width="3.600" height="11" fill="#35a853"/><rect x="7.200" y="11" width="3.600" height="8" fill="#e0453a"/><rect x="12.400" y="3" width="3.600" height="16" fill="#3b74d8"/></svg>
<span class="t" style="left:1103.60px;top:88.00px;font-size:10.22px;line-height:30px;color:#1c2230;letter-spacing:0.040px;-webkit-text-stroke:0.22px #1c2230;">Réaliste</span>
<svg class="i" style="left:1162.80px;top:96.80px;" width="10.4" height="10.4" viewBox="0 0 24 24" fill="none" stroke="#4a5160" stroke-width="2" stroke-linecap="round" stroke-linejoin="round"><path d="m6 9 6 6 6-6"/></svg>
<div class="b" style="left:1180.80px;top:89.50px;width:88.20px;height:24.60px;border-radius:6.5px;background:#fff;border:1px solid #e4e7ee;"></div>
<svg class="i" style="left:1190.00px;top:96.40px;" width="10.6" height="10.6" viewBox="0 0 24 24" fill="none" stroke="#4b5563" stroke-width="1.9" stroke-linecap="round" stroke-linejoin="round"><path d="M12.220 2h-.44a2 2 0 0 0-2 2v.180a2 2 0 0 1-1 1.730l-.430.250a2 2 0 0 1-2 0l-.150-.080a2 2 0 0 0-2.730.730l-.220.380a2 2 0 0 0 .730 2.730l.150.100a2 2 0 0 1 1 1.720v.510a2 2 0 0 1-1 1.740l-.150.090a2 2 0 0 0-.730 2.730l.220.380a2 2 0 0 0 2.730.730l.150-.080a2 2 0 0 1 2 0l.430.250a2 2 0 0 1 1 1.730V20a2 2 0 0 0 2 2h.440a2 2 0 0 0 2-2v-.180a2 2 0 0 1 1-1.730l.430-.250a2 2 0 0 1 2 0l.150.080a2 2 0 0 0 2.730-.730l.220-.390a2 2 0 0 0-.730-2.730l-.150-.080a2 2 0 0 1-1-1.740v-.500a2 2 0 0 1 1-1.740l.150-.090a2 2 0 0 0 .730-2.730l-.220-.380a2 2 0 0 0-2.730-.730l-.150.080a2 2 0 0 1-2 0l-.430-.250a2 2 0 0 1-1-1.730V4a2 2 0 0 0-2-2z"/><circle cx="12" cy="12" r="3"/></svg>
<span class="t" style="left:1205.80px;top:87.00px;font-size:10.28px;line-height:30px;color:#3a4252;letter-spacing:0.041px;-webkit-text-stroke:0.22px #3a4252;">Paramètres</span>
<div class="b" style="left:181.60px;top:135.10px;width:210.10px;height:83.40px;border-radius:9.5px;background:#fff;border:1px solid #f9f9fc;box-shadow:0 1px 3px rgba(16,24,40,.055);"></div>
<span class="t" style="left:193.70px;top:142.00px;font-size:8.4px;line-height:30px;color:#465066;letter-spacing:0.291px;-webkit-text-stroke:0.18px #465066;">TRÉSO ACTUELLE</span>
<span class="t" style="left:193.70px;top:167.00px;font-size:18.06px;line-height:30px;color:#141a2a;font-weight:700;letter-spacing:0.791px;text-shadow:0.5px 0 0 #141a2a;">124<i style="display:inline-block;width:2.35px"></i>800 €</span>
<span class="t" style="left:193.70px;top:187.00px;font-size:8.86px;line-height:30px;color:#a2a9b8;letter-spacing:0.034px;">Solde début M1</span>
<div class="b" style="left:360.10px;top:147.20px;width:19.80px;height:19.70px;border-radius:5px;background:#e4ecff;"></div>
<svg class="i" style="left:364.40px;top:151.40px;" width="11.2" height="11.2" viewBox="0 0 24 24" fill="none" stroke="#2f6bea" stroke-width="2.1" stroke-linecap="round" stroke-linejoin="round"><polyline points="22 7 13.500 15.500 8.500 10.500 2 17"/><polyline points="16 7 22 7 22 13"/></svg>
<div class="b" style="left:400.80px;top:135.10px;width:210.00px;height:83.40px;border-radius:9.5px;background:#fff;border:1px solid #f9f9fc;box-shadow:0 1px 3px rgba(16,24,40,.055);"></div>
<span class="t" style="left:412.90px;top:142.00px;font-size:8.4px;line-height:30px;color:#465066;letter-spacing:0.495px;-webkit-text-stroke:0.18px #465066;">TRÉSO MINIMUM</span>
<span class="t" style="left:412.90px;top:167.00px;font-size:18.06px;line-height:30px;color:#141a2a;font-weight:700;letter-spacing:0.729px;text-shadow:0.5px 0 0 #141a2a;">77<i style="display:inline-block;width:2.35px"></i>500 €</span>
<span class="t" style="left:412.90px;top:187.00px;font-size:8.8px;line-height:30px;color:#a2a9b8;letter-spacing:0.037px;">12 prochains mois</span>
<div class="b" style="left:579.20px;top:147.20px;width:19.80px;height:19.70px;border-radius:5px;background:#fde3e3;"></div>
<svg class="i" style="left:583.50px;top:151.40px;" width="11.2" height="11.2" viewBox="0 0 24 24" fill="none" stroke="#e0403c" stroke-width="2.1" stroke-linecap="round" stroke-linejoin="round"><polyline points="22 17 13.500 8.500 8.500 13.500 2 7"/><polyline points="16 17 22 17 22 11"/></svg>
<div class="b" style="left:619.80px;top:135.10px;width:210.20px;height:83.40px;border-radius:9.5px;background:#fff;border:1px solid #f9f9fc;box-shadow:0 1px 3px rgba(16,24,40,.055);"></div>
<span class="t" style="left:631.90px;top:142.00px;font-size:8.4px;line-height:30px;color:#465066;letter-spacing:0.469px;-webkit-text-stroke:0.18px #465066;">TRÉSO MAXIMUM</span>
<span class="t" style="left:631.90px;top:167.00px;font-size:18.06px;line-height:30px;color:#141a2a;font-weight:700;letter-spacing:0.905px;text-shadow:0.5px 0 0 #141a2a;">192<i style="display:inline-block;width:2.35px"></i>300 €</span>
<span class="t" style="left:631.90px;top:187.00px;font-size:8.8px;line-height:30px;color:#a2a9b8;letter-spacing:0.037px;">12 prochains mois</span>
<div class="b" style="left:798.40px;top:147.20px;width:19.80px;height:19.70px;border-radius:5px;background:#e2f5e5;"></div>
<svg class="i" style="left:802.70px;top:151.40px;" width="11.2" height="11.2" viewBox="0 0 24 24" fill="none" stroke="#35a852" stroke-width="2.1" stroke-linecap="round" stroke-linejoin="round"><polyline points="22 7 13.500 15.500 8.500 10.500 2 17"/><polyline points="16 7 22 7 22 13"/></svg>
<div class="b" style="left:839.10px;top:135.10px;width:210.10px;height:83.40px;border-radius:9.5px;background:#fff;border:1px solid #f9f9fc;box-shadow:0 1px 3px rgba(16,24,40,.055);"></div>
<span class="t" style="left:851.20px;top:142.00px;font-size:8.4px;line-height:30px;color:#465066;letter-spacing:0.336px;-webkit-text-stroke:0.18px #465066;">CASH BURN MENSUEL</span>
<span class="t" style="left:851.20px;top:167.00px;font-size:18.06px;line-height:30px;color:#141a2a;font-weight:700;letter-spacing:1.019px;text-shadow:0.5px 0 0 #141a2a;">365<i style="display:inline-block;width:2.35px"></i>933 €</span>
<span class="t" style="left:851.20px;top:187.00px;font-size:8.7px;line-height:30px;color:#a2a9b8;letter-spacing:0.035px;">Décaissements / 12</span>
<div class="b" style="left:1017.60px;top:147.20px;width:19.80px;height:19.70px;border-radius:5px;background:#fde7da;"></div>
<svg class="i" style="left:1021.90px;top:151.40px;" width="11.2" height="11.2" viewBox="0 0 24 24" fill="none" stroke="#ef7a3a" stroke-width="2.1" stroke-linecap="round" stroke-linejoin="round"><polygon points="13 2 3 14 12 14 11 22 21 10 12 10 13 2"/></svg>
<div class="b" style="left:1057.90px;top:135.10px;width:211.00px;height:83.40px;border-radius:9.5px;background:#fff;border:1px solid #f3b3b3;box-shadow:0 1px 3px rgba(16,24,40,.055);"></div>
<span class="t" style="left:1070.00px;top:142.00px;font-size:8.4px;line-height:30px;color:#465066;letter-spacing:0.320px;-webkit-text-stroke:0.18px #465066;">RUNWAY</span>
<span class="t" style="left:1070.00px;top:167.00px;font-size:17.93px;line-height:30px;color:#c51d1d;font-weight:700;letter-spacing:-0.360px;text-shadow:0.5px 0 0 #c51d1d;">0 mois</span>
<span class="t" style="left:1070.00px;top:187.00px;font-size:8.93px;line-height:30px;color:#a2a9b8;letter-spacing:0.107px;">À budget constant</span>
<div class="b" style="left:1237.30px;top:147.20px;width:19.80px;height:19.70px;border-radius:5px;background:#ebe4fd;"></div>
<svg class="i" style="left:1241.60px;top:151.40px;" width="11.2" height="11.2" viewBox="0 0 24 24" fill="none" stroke="#7a4fe6" stroke-width="2.1" stroke-linecap="round" stroke-linejoin="round"><circle cx="12" cy="12" r="10"/><polyline points="12 6 12 12 16 14"/></svg>
<div class="b" style="left:181.70px;top:233.60px;width:1087.00px;height:239.90px;border-radius:9.5px;background:#fff;border:1px solid #f8f8fb;box-shadow:0 1px 3px rgba(16,24,40,.05);"></div>
<svg class="i" style="left:196.6px;top:250.6px" width="9.4" height="10" viewBox="0 0 19 20"><rect x="0" y="0" width="19" height="20" rx="1.500" fill="#eef0f4" stroke="#d9dde5" stroke-width=".8"/><path d="M2 16 L7 10 L10.500 13 L17 4" stroke="#e0453a" stroke-width="2.200" fill="none" stroke-linejoin="round" stroke-linecap="round"/></svg>
<span class="t" style="left:209.20px;top:240.00px;font-size:10.5px;line-height:30px;color:#1b2232;font-weight:700;letter-spacing:-0.208px;">Évolution trésorerie sur 12 mois</span>
<svg class="i" style="left:0;top:0" width="1280" height="668" viewBox="0 0 1280 668"><defs><linearGradient id="gE" x1="0" y1="0" x2="0" y2="1"><stop offset="0" stop-color="#3fae4a" stop-opacity=".165"/><stop offset="1" stop-color="#3fae4a" stop-opacity=".01"/></linearGradient><linearGradient id="gD" x1="0" y1="0" x2="0" y2="1"><stop offset="0" stop-color="#e23b3b" stop-opacity=".155"/><stop offset="1" stop-color="#e23b3b" stop-opacity=".01"/></linearGradient><linearGradient id="gS" x1="0" y1="0" x2="0" y2="1"><stop offset="0" stop-color="#2f62e0" stop-opacity=".24"/><stop offset="1" stop-color="#2f62e0" stop-opacity=".0"/></linearGradient></defs><path d="M246.50,381.65H1246.40M246.50,347.00H1246.40M246.50,312.35H1246.40M246.50,277.70H1246.40M337.40,277.70V416.50M428.30,277.70V416.50M519.20,277.70V416.50M610.10,277.70V416.50M701.00,277.70V416.50M791.90,277.70V416.50M882.80,277.70V416.50M973.70,277.70V416.50M1064.60,277.70V416.50M1155.50,277.70V416.50M1246.40,277.70V416.50" stroke="#e6e8ee" stroke-width=".65" stroke-dasharray="1.800 1.800" fill="none"/><path d="M246.50,353.30C276.80,352.42,307.10,351.55,337.40,348.05C367.70,344.55,398.00,327.29,428.30,327.29C458.60,327.29,488.90,330.94,519.20,330.94C549.50,330.94,579.80,329.42,610.10,326.37C640.40,323.33,670.70,309.03,701.00,309.03C731.30,309.03,761.60,336.26,791.90,344.86C822.20,353.45,852.50,360.60,882.80,360.60C913.10,360.60,943.40,316.79,973.70,316.79C1004.00,316.79,1034.30,320.67,1064.60,320.67C1094.90,320.67,1125.20,316.79,1155.50,316.79C1185.80,316.79,1216.10,329.00,1246.40,341.21L1246.40,416.50L246.50,416.50Z" fill="url(#gE)"/><path d="M246.50,340.52C276.80,340.03,307.10,339.53,337.40,337.55C367.70,335.58,398.00,327.06,428.30,327.06C458.60,327.06,488.90,332.99,519.20,332.99C549.50,332.99,579.80,329.34,610.10,327.74C640.40,326.15,670.70,323.41,701.00,323.41C731.30,323.41,761.60,336.22,791.90,340.29C822.20,344.36,852.50,347.82,882.80,347.82C913.10,347.82,943.40,323.64,973.70,323.64C1004.00,323.64,1034.30,328.88,1064.60,328.88C1094.90,328.88,1125.20,326.83,1155.50,326.83C1185.80,326.83,1216.10,326.83,1246.40,326.83L1246.40,416.50L246.50,416.50Z" fill="url(#gD)"/><path d="M246.50,387.98C276.80,393.34,307.10,398.70,337.40,398.70C367.70,398.70,398.00,398.70,428.30,398.70C458.60,398.70,488.90,397.33,519.20,396.65C549.50,395.96,579.80,395.96,610.10,394.60C640.40,393.23,670.70,380.45,701.00,380.45C731.30,380.45,761.60,381.89,791.90,384.78C822.20,387.67,852.50,397.79,882.80,397.79C913.10,397.79,943.40,393.27,973.70,390.72C1004.00,388.17,1034.30,385.55,1064.60,382.50C1094.90,379.46,1125.20,372.46,1155.50,372.46C1185.80,372.46,1216.10,379.54,1246.40,386.61L1246.40,416.50L246.50,416.50Z" fill="url(#gS)"/><path d="M246.50,277.70V416.50M246.50,416.50H1246.40M242.50,416.30H246.50M242.50,381.65H246.50M242.50,347.00H246.50M242.50,312.35H246.50M242.50,277.70H246.50M246.50,416.50v4M337.40,416.50v4M428.30,416.50v4M519.20,416.50v4M610.10,416.50v4M701.00,416.50v4M791.90,416.50v4M882.80,416.50v4M973.70,416.50v4M1064.60,416.50v4M1155.50,416.50v4M1246.40,416.50v4" stroke="#8b8f98" stroke-width=".8" fill="none"/><path d="M246.50,416.50H1246.40" stroke="#f4a3a3" stroke-width=".7" stroke-dasharray="2.600 2.200" fill="none"/><path d="M246.50,353.30C276.80,352.42,307.10,351.55,337.40,348.05C367.70,344.55,398.00,327.29,428.30,327.29C458.60,327.29,488.90,330.94,519.20,330.94C549.50,330.94,579.80,329.42,610.10,326.37C640.40,323.33,670.70,309.03,701.00,309.03C731.30,309.03,761.60,336.26,791.90,344.86C822.20,353.45,852.50,360.60,882.80,360.60C913.10,360.60,943.40,316.79,973.70,316.79C1004.00,316.79,1034.30,320.67,1064.60,320.67C1094.90,320.67,1125.20,316.79,1155.50,316.79C1185.80,316.79,1216.10,329.00,1246.40,341.21" stroke="#45ac4c" stroke-width="1.250" fill="none"/><path d="M246.50,340.52C276.80,340.03,307.10,339.53,337.40,337.55C367.70,335.58,398.00,327.06,428.30,327.06C458.60,327.06,488.90,332.99,519.20,332.99C549.50,332.99,579.80,329.34,610.10,327.74C640.40,326.15,670.70,323.41,701.00,323.41C731.30,323.41,761.60,336.22,791.90,340.29C822.20,344.36,852.50,347.82,882.80,347.82C913.10,347.82,943.40,323.64,973.70,323.64C1004.00,323.64,1034.30,328.88,1064.60,328.88C1094.90,328.88,1125.20,326.83,1155.50,326.83C1185.80,326.83,1216.10,326.83,1246.40,326.83" stroke="#df3a3a" stroke-width="1.250" fill="none"/><path d="M246.50,387.98C276.80,393.34,307.10,398.70,337.40,398.70C367.70,398.70,398.00,398.70,428.30,398.70C458.60,398.70,488.90,397.33,519.20,396.65C549.50,395.96,579.80,395.96,610.10,394.60C640.40,393.23,670.70,380.45,701.00,380.45C731.30,380.45,761.60,381.89,791.90,384.78C822.20,387.67,852.50,397.79,882.80,397.79C913.10,397.79,943.40,393.27,973.70,390.72C1004.00,388.17,1034.30,385.55,1064.60,382.50C1094.90,379.46,1125.20,372.46,1155.50,372.46C1185.80,372.46,1216.10,379.54,1246.40,386.61" stroke="#2b6cf0" stroke-width="1.800" fill="none"/><path d="M594.5,447.400h3.100M601.4,447.400h3.100" stroke="#45ac4c" stroke-width="1.100" fill="none"/><circle cx="599.5" cy="447.400" r="1.900" stroke="#45ac4c" stroke-width="1.100" fill="none"/><path d="M692,447.400h3.100M698.9,447.400h3.100" stroke="#df3a3a" stroke-width="1.100" fill="none"/><circle cx="697" cy="447.400" r="1.900" stroke="#df3a3a" stroke-width="1.100" fill="none"/><path d="M790.5,447.400h3.100M797.4,447.400h3.100" stroke="#3b6fe6" stroke-width="1.100" fill="none"/><circle cx="795.5" cy="447.400" r="1.900" stroke="#3b6fe6" stroke-width="1.100" fill="none"/></svg>
<span class="t" style="left:226.62px;top:402.00px;font-size:8.63px;line-height:30px;color:#66708a;letter-spacing:0.035px;">0k€</span>
<span class="t" style="left:216.97px;top:367.00px;font-size:8.62px;line-height:30px;color:#66708a;letter-spacing:0.036px;">150k€</span>
<span class="t" style="left:216.97px;top:332.00px;font-size:8.62px;line-height:30px;color:#66708a;letter-spacing:0.036px;">300k€</span>
<span class="t" style="left:216.97px;top:298.00px;font-size:8.62px;line-height:30px;color:#66708a;letter-spacing:0.036px;">450k€</span>
<span class="t" style="left:216.97px;top:265.00px;font-size:8.62px;line-height:30px;color:#66708a;letter-spacing:0.036px;">600k€</span>
<span class="t" style="left:239.61px;top:410.00px;font-size:8.51px;line-height:30px;color:#66708a;letter-spacing:0.031px;">Jan</span>
<span class="t" style="left:330.27px;top:410.00px;font-size:8.51px;line-height:30px;color:#66708a;letter-spacing:0.033px;">Fév</span>
<span class="t" style="left:420.94px;top:410.00px;font-size:8.51px;line-height:30px;color:#66708a;letter-spacing:0.034px;">Mar</span>
<span class="t" style="left:512.87px;top:410.00px;font-size:8.5px;line-height:30px;color:#66708a;letter-spacing:0.036px;">Avr</span>
<span class="t" style="left:603.21px;top:410.00px;font-size:8.51px;line-height:30px;color:#66708a;letter-spacing:0.031px;">Mai</span>
<span class="t" style="left:694.11px;top:410.00px;font-size:8.51px;line-height:30px;color:#66708a;letter-spacing:0.031px;">Jun</span>
<span class="t" style="left:786.44px;top:410.00px;font-size:8.5px;line-height:30px;color:#66708a;letter-spacing:0.031px;">Jul</span>
<span class="t" style="left:875.19px;top:410.00px;font-size:8.51px;line-height:30px;color:#66708a;letter-spacing:0.035px;">Aoû</span>
<span class="t" style="left:966.09px;top:410.00px;font-size:8.51px;line-height:30px;color:#66708a;letter-spacing:0.035px;">Sep</span>
<span class="t" style="left:1057.95px;top:410.00px;font-size:8.51px;line-height:30px;color:#66708a;letter-spacing:0.030px;">Oct</span>
<span class="t" style="left:1147.90px;top:410.00px;font-size:8.51px;line-height:30px;color:#66708a;letter-spacing:0.035px;">Nov</span>
<span class="t" style="left:1238.80px;top:410.00px;font-size:8.51px;line-height:30px;color:#66708a;letter-spacing:0.035px;">Déc</span>
<span class="t" style="left:607.60px;top:432.00px;font-size:11.28px;line-height:30px;color:#4cae52;letter-spacing:0.043px;">Encaissements</span>
<span class="t" style="left:705.00px;top:432.00px;font-size:11.33px;line-height:30px;color:#e03c3c;letter-spacing:0.046px;">Décaissements</span>
<span class="t" style="left:803.80px;top:432.00px;font-size:11.34px;line-height:30px;color:#3b6fe6;letter-spacing:0.046px;">Solde fin</span>
<div class="b" style="left:181.40px;top:488.20px;width:458.40px;height:23.60px;border-radius:8px;background:#fff;border:1px solid #eceef4;"></div>
<div class="b" style="left:185.00px;top:492.00px;width:87.20px;height:16.20px;border-radius:4.5px;background:#10162a;"></div>
<svg class="i" style="left:193.300px;top:496px" width="8.800" height="8.800" viewBox="0 0 18 18"><rect x="0" y="0" width="18" height="18" rx="3" fill="#f3f4f8"/><path d="M0 6.300H18M0 11.700H18M6.300 0V18M11.700 0V18" stroke="#10162a" stroke-width="1.500"/></svg>
<span class="t" style="left:208.00px;top:485.00px;font-size:8.89px;line-height:30px;color:#fff;font-weight:700;letter-spacing:-0.177px;">Saisie tableur</span>
<svg class="i" style="left:283.20px;top:495.10px;" width="10.2" height="10.2" viewBox="0 0 24 24" fill="none" stroke="#6f7889" stroke-width="1.9" stroke-linecap="round" stroke-linejoin="round"><rect width="18" height="18" x="3" y="3" rx="2"/><path d="M3 9h18"/><path d="M9 9v12"/></svg>
<span class="t" style="left:298.00px;top:485.00px;font-size:8.93px;line-height:30px;color:#5d6678;letter-spacing:0.037px;-webkit-text-stroke:0.18px #5d6678;">Tableau</span>
<svg class="i" style="left:349.40px;top:495.10px;" width="10.2" height="10.2" viewBox="0 0 24 24" fill="none" stroke="#6f7889" stroke-width="1.9" stroke-linecap="round" stroke-linejoin="round"><line x1="8" x2="21" y1="6" y2="6"/><line x1="8" x2="21" y1="12" y2="12"/><line x1="8" x2="21" y1="18" y2="18"/><line x1="3" x2="3.010" y1="6" y2="6"/><line x1="3" x2="3.010" y1="12" y2="12"/><line x1="3" x2="3.010" y1="18" y2="18"/></svg>
<span class="t" style="left:364.00px;top:485.00px;font-size:9.16px;line-height:30px;color:#5d6678;letter-spacing:0.037px;-webkit-text-stroke:0.18px #5d6678;">Lignes de flux</span>
<svg class="i" style="left:442px;top:496.2px" width="6.600" height="8.200" viewBox="0 0 13 16"><rect x="1" y="1" width="11" height="2.400" fill="#a5acb9"/><path d="M2 4.500h9v10.500l-1.500-1-1.500 1-1.500-1-1.500 1-1.500-1-1.500 1z" fill="#e9ebf0" stroke="#b9bfca" stroke-width=".8"/><path d="M4 7h5M4 9.500h5" stroke="#b1b7c3" stroke-width=".9"/></svg>
<span class="t" style="left:452.60px;top:485.00px;font-size:8.3px;line-height:30px;color:#5d6678;letter-spacing:0.037px;-webkit-text-stroke:0.18px #5d6678;">TVA</span>
<svg class="i" style="left:488.20px;top:495.00px;" width="10.2" height="10.2" viewBox="0 0 24 24" fill="none" stroke="#6f7889" stroke-width="1.9" stroke-linecap="round" stroke-linejoin="round"><path d="m21.730 18-8-14a2 2 0 0 0-3.480 0l-8 14A2 2 0 0 0 4 21h16a2 2 0 0 0 1.730-3Z"/><path d="M12 9v4"/><path d="M12 17h.01"/></svg>
<span class="t" style="left:502.80px;top:485.00px;font-size:9.31px;line-height:30px;color:#5d6678;letter-spacing:0.038px;-webkit-text-stroke:0.18px #5d6678;">Alertes</span>
<svg class="i" style="left:551.80px;top:495.00px;" width="10.2" height="10.2" viewBox="0 0 24 24" fill="none" stroke="#6f7889" stroke-width="1.9" stroke-linecap="round" stroke-linejoin="round"><path d="M21 15v4a2 2 0 0 1-2 2H5a2 2 0 0 1-2-2v-4"/><polyline points="17 8 12 3 7 8"/><line x1="12" x2="12" y1="3" y2="15"/></svg>
<span class="t" style="left:566.50px;top:485.00px;font-size:9.22px;line-height:30px;color:#5d6678;letter-spacing:0.039px;-webkit-text-stroke:0.18px #5d6678;">Import / Export</span>
<div class="b" style="left:1063.40px;top:523.50px;width:205.00px;height:26.90px;border-radius:8px;background:#fff;border:1px solid #eceef4;"></div>
<div class="b" style="left:1067.20px;top:527.40px;width:103.70px;height:19.40px;border-radius:4.500px;background:#10162a;"></div>
<svg class="i" style="left:1075.40px;top:532.20px;" width="10.2" height="10.2" viewBox="0 0 24 24" fill="none" stroke="#fff" stroke-width="2.2" stroke-linecap="round" stroke-linejoin="round"><rect width="18" height="18" x="3" y="3" rx="2"/><path d="M12 3v18"/></svg>
<span class="t" style="left:1089.70px;top:522.00px;font-size:9.0px;line-height:30px;color:#fff;font-weight:700;letter-spacing:-0.180px;">Mois en colonnes</span>
<svg class="i" style="left:1182.40px;top:532.20px;" width="10.2" height="10.2" viewBox="0 0 24 24" fill="none" stroke="#8f99ad" stroke-width="1.9" stroke-linecap="round" stroke-linejoin="round"><rect width="18" height="18" x="3" y="3" rx="2"/><path d="M3 12h18"/></svg>
<span class="t" style="left:1197.10px;top:522.00px;font-size:9.19px;line-height:30px;color:#5d6b85;letter-spacing:0.035px;-webkit-text-stroke:0.18px #5d6b85;">Mois en lignes</span>
<div class="b" style="left:182.40px;top:559.60px;width:1086.00px;height:120.00px;border-radius:9px 9px 0 0;background:#fff;border:1px solid #eceef3;"></div>
<div class="b" style="left:182.40px;top:559.60px;width:1086.00px;height:28.60px;border-radius:9px 9px 0 0;background:#12172c;"></div>
<div class="b" style="left:182.40px;top:588.00px;width:1086.00px;height:26.00px;background:#4da053;"></div>
<div class="b" style="left:182.40px;top:634.00px;width:1086.00px;height:0.90px;background:#eef0f4;"></div>
<div class="b" style="left:182.40px;top:654.10px;width:1086.00px;height:0.90px;background:#eef0f4;"></div>
<span class="t" style="left:190.70px;top:559.00px;font-size:9.09px;line-height:30px;color:#fff;font-weight:700;letter-spacing:-0.184px;">Ligne</span>
<span class="t" style="left:334.50px;top:559.00px;font-size:9.28px;line-height:30px;color:#b9bdc8;font-weight:700;letter-spacing:-0.187px;">Catégorie</span>
<span class="t" style="left:469.07px;top:559.00px;font-size:9.42px;line-height:30px;color:#fff;font-weight:700;letter-spacing:-0.190px;">Jan</span>
<span class="t" style="left:528.07px;top:559.00px;font-size:9.42px;line-height:30px;color:#fff;font-weight:700;letter-spacing:-0.190px;">Fév</span>
<span class="t" style="left:586.02px;top:559.00px;font-size:9.41px;line-height:30px;color:#fff;font-weight:700;letter-spacing:-0.187px;">Mar</span>
<span class="t" style="left:645.80px;top:559.00px;font-size:9.43px;line-height:30px;color:#fff;font-weight:700;letter-spacing:-0.188px;">Avr</span>
<span class="t" style="left:704.03px;top:559.00px;font-size:9.43px;line-height:30px;color:#fff;font-weight:700;letter-spacing:-0.192px;">Mai</span>
<span class="t" style="left:761.82px;top:559.00px;font-size:9.41px;line-height:30px;color:#fff;font-weight:700;letter-spacing:-0.187px;">Jun</span>
<span class="t" style="left:823.75px;top:559.00px;font-size:9.46px;line-height:30px;color:#fff;font-weight:700;letter-spacing:-0.188px;">Jul</span>
<span class="t" style="left:878.56px;top:559.00px;font-size:9.39px;line-height:30px;color:#fff;font-weight:700;letter-spacing:-0.185px;">Aoû</span>
<span class="t" style="left:937.56px;top:559.00px;font-size:9.41px;line-height:30px;color:#fff;font-weight:700;letter-spacing:-0.193px;">Sep</span>
<span class="t" style="left:997.33px;top:559.00px;font-size:9.43px;line-height:30px;color:#fff;font-weight:700;letter-spacing:-0.192px;">Oct</span>
<span class="t" style="left:1054.51px;top:559.00px;font-size:9.4px;line-height:30px;color:#fff;font-weight:700;letter-spacing:-0.189px;">Nov</span>
<span class="t" style="left:1113.16px;top:559.00px;font-size:9.41px;line-height:30px;color:#fff;font-weight:700;letter-spacing:-0.193px;">Déc</span>
<span class="t" style="left:1174.60px;top:559.00px;font-size:9.37px;line-height:30px;color:#fff;font-weight:700;letter-spacing:-0.190px;">TOTAL</span>
<svg class="i" style="left:191.8px;top:596.6px" width="6" height="8.600" viewBox="0 0 27 33"><path d="M9.500 2.500c1.500-1 3-.3 4 .5 1-.8 2.500-1.500 4-.5 1 .7.600 2-.2 3.300L16 8h-5L9.700 5.800C8.900 4.500 8.500 3.200 9.500 2.500z" fill="#c99a4a"/><path d="M11 9h5c5.500 3.500 9.500 9.500 9.500 15 0 5-4.500 8-12 8s-12-3-12-8c0-5.500 4-11.500 9.500-15z" fill="#e0b060"/><circle cx="13.500" cy="22" r="5.500" fill="#f4e6ad"/></svg>
<span class="t" style="left:201.50px;top:586.00px;font-size:9.13px;line-height:30px;color:#fff;font-weight:700;letter-spacing:-0.181px;">Encaissements</span>
<span class="t" style="left:320.50px;top:586.00px;font-size:9.16px;line-height:30px;color:#f1f8f1;font-weight:700;letter-spacing:-0.181px;">Catégorie</span>
<span class="t" style="left:446.98px;top:586.00px;font-size:9.52px;line-height:30px;color:#fff;font-weight:700;letter-spacing:-0.190px;">Jan</span>
<span class="t" style="left:509.28px;top:586.00px;font-size:9.52px;line-height:30px;color:#fff;font-weight:700;letter-spacing:-0.190px;">Fév</span>
<span class="t" style="left:570.46px;top:586.00px;font-size:9.51px;line-height:30px;color:#fff;font-weight:700;letter-spacing:-0.187px;">Mar</span>
<span class="t" style="left:633.84px;top:586.00px;font-size:9.53px;line-height:30px;color:#fff;font-weight:700;letter-spacing:-0.188px;">Avr</span>
<span class="t" style="left:695.50px;top:586.00px;font-size:9.53px;line-height:30px;color:#fff;font-weight:700;letter-spacing:-0.192px;">Mai</span>
<span class="t" style="left:756.47px;top:586.00px;font-size:9.51px;line-height:30px;color:#fff;font-weight:700;letter-spacing:-0.187px;">Jun</span>
<span class="t" style="left:821.06px;top:586.00px;font-size:9.56px;line-height:30px;color:#fff;font-weight:700;letter-spacing:-0.188px;">Jul</span>
<span class="t" style="left:878.42px;top:586.00px;font-size:9.5px;line-height:30px;color:#fff;font-weight:700;letter-spacing:-0.194px;">Aoû</span>
<span class="t" style="left:940.94px;top:586.00px;font-size:9.51px;line-height:30px;color:#fff;font-weight:700;letter-spacing:-0.193px;">Sep</span>
<span class="t" style="left:1004.00px;top:586.00px;font-size:9.53px;line-height:30px;color:#fff;font-weight:700;letter-spacing:-0.192px;">Oct</span>
<span class="t" style="left:1063.93px;top:586.00px;font-size:9.5px;line-height:30px;color:#fff;font-weight:700;letter-spacing:-0.189px;">Nov</span>
<span class="t" style="left:1126.44px;top:586.00px;font-size:9.51px;line-height:30px;color:#fff;font-weight:700;letter-spacing:-0.193px;">Déc</span>
<span class="t" style="left:1180.00px;top:586.00px;font-size:9.49px;line-height:30px;color:#fff;font-weight:700;letter-spacing:-0.187px;">TOTAL</span>
<span class="t" style="left:187.80px;top:609.00px;font-size:9.16px;line-height:30px;color:#1e2535;letter-spacing:0.034px;-webkit-text-stroke:0.2px #1e2535;">CA — Ventes produits...</span>
<span class="t" style="left:320.50px;top:609.00px;font-size:7.9px;line-height:30px;color:#9aa5bf;letter-spacing:0.031px;">Chiffre d'affaires</span>
<span class="t" style="left:420.97px;top:609.00px;font-size:8.9px;line-height:30px;color:#2c3444;letter-spacing:0.589px;">260<i style="display:inline-block;width:1.42px"></i>000</span>
<span class="t" style="left:482.97px;top:609.00px;font-size:8.9px;line-height:30px;color:#2c3444;letter-spacing:0.589px;">280<i style="display:inline-block;width:1.42px"></i>000</span>
<span class="t" style="left:544.97px;top:609.00px;font-size:8.9px;line-height:30px;color:#2c3444;letter-spacing:0.589px;">320<i style="display:inline-block;width:1.42px"></i>000</span>
<span class="t" style="left:606.97px;top:609.00px;font-size:8.9px;line-height:30px;color:#2c3444;letter-spacing:0.589px;">350<i style="display:inline-block;width:1.42px"></i>000</span>
<span class="t" style="left:668.37px;top:609.00px;font-size:8.9px;line-height:30px;color:#2c3444;letter-spacing:0.589px;">370<i style="display:inline-block;width:1.42px"></i>000</span>
<span class="t" style="left:729.97px;top:609.00px;font-size:8.9px;line-height:30px;color:#2c3444;letter-spacing:0.589px;">390<i style="display:inline-block;width:1.42px"></i>000</span>
<span class="t" style="left:792.27px;top:609.00px;font-size:8.9px;line-height:30px;color:#2c3444;letter-spacing:0.589px;">290<i style="display:inline-block;width:1.42px"></i>000</span>
<span class="t" style="left:854.27px;top:609.00px;font-size:8.9px;line-height:30px;color:#2c3444;letter-spacing:0.589px;">230<i style="display:inline-block;width:1.42px"></i>000</span>
<span class="t" style="left:915.97px;top:609.00px;font-size:8.9px;line-height:30px;color:#2c3444;letter-spacing:0.589px;">360<i style="display:inline-block;width:1.42px"></i>000</span>
<span class="t" style="left:977.77px;top:609.00px;font-size:8.9px;line-height:30px;color:#2c3444;letter-spacing:0.589px;">390<i style="display:inline-block;width:1.42px"></i>000</span>
<span class="t" style="left:1038.97px;top:609.00px;font-size:8.9px;line-height:30px;color:#2c3444;letter-spacing:0.589px;">380<i style="display:inline-block;width:1.42px"></i>000</span>
<span class="t" style="left:1100.17px;top:609.00px;font-size:8.9px;line-height:30px;color:#2c3444;letter-spacing:0.589px;">310<i style="display:inline-block;width:1.42px"></i>000</span>
<span class="t" style="left:1156.80px;top:609.00px;font-size:9.77px;line-height:30px;color:#2e7d32;font-weight:700;letter-spacing:0.285px;">3<i style="display:inline-block;width:1.27px"></i>930<i style="display:inline-block;width:1.27px"></i>000 €</span>
<span class="t" style="left:187.80px;top:630.00px;font-size:9.06px;line-height:30px;color:#1e2535;letter-spacing:0.038px;-webkit-text-stroke:0.2px #1e2535;">CA — Prestations &amp; s...</span>
<span class="t" style="left:320.50px;top:630.00px;font-size:7.9px;line-height:30px;color:#9aa5bf;letter-spacing:0.031px;">Chiffre d'affaires</span>
<span class="t" style="left:423.69px;top:630.00px;font-size:8.9px;line-height:30px;color:#2c3444;letter-spacing:0.613px;">15<i style="display:inline-block;width:1.42px"></i>000</span>
<span class="t" style="left:485.69px;top:630.00px;font-size:8.9px;line-height:30px;color:#2c3444;letter-spacing:0.613px;">16<i style="display:inline-block;width:1.42px"></i>000</span>
<span class="t" style="left:547.69px;top:630.00px;font-size:8.9px;line-height:30px;color:#2c3444;letter-spacing:0.613px;">18<i style="display:inline-block;width:1.42px"></i>000</span>
<span class="t" style="left:609.69px;top:630.00px;font-size:8.9px;line-height:30px;color:#2c3444;letter-spacing:0.613px;">20<i style="display:inline-block;width:1.42px"></i>000</span>
<span class="t" style="left:671.09px;top:630.00px;font-size:8.9px;line-height:30px;color:#2c3444;letter-spacing:0.613px;">22<i style="display:inline-block;width:1.42px"></i>000</span>
<span class="t" style="left:732.69px;top:630.00px;font-size:8.9px;line-height:30px;color:#2c3444;letter-spacing:0.613px;">25<i style="display:inline-block;width:1.42px"></i>000</span>
<span class="t" style="left:794.99px;top:630.00px;font-size:8.9px;line-height:30px;color:#2c3444;letter-spacing:0.613px;">18<i style="display:inline-block;width:1.42px"></i>000</span>
<span class="t" style="left:856.99px;top:630.00px;font-size:8.9px;line-height:30px;color:#2c3444;letter-spacing:0.613px;">12<i style="display:inline-block;width:1.42px"></i>000</span>
<span class="t" style="left:918.69px;top:630.00px;font-size:8.9px;line-height:30px;color:#2c3444;letter-spacing:0.613px;">22<i style="display:inline-block;width:1.42px"></i>000</span>
<span class="t" style="left:980.49px;top:630.00px;font-size:8.9px;line-height:30px;color:#2c3444;letter-spacing:0.613px;">25<i style="display:inline-block;width:1.42px"></i>000</span>
<span class="t" style="left:1041.69px;top:630.00px;font-size:8.9px;line-height:30px;color:#2c3444;letter-spacing:0.613px;">22<i style="display:inline-block;width:1.42px"></i>000</span>
<span class="t" style="left:1102.89px;top:630.00px;font-size:8.9px;line-height:30px;color:#2c3444;letter-spacing:0.613px;">18<i style="display:inline-block;width:1.42px"></i>000</span>
<span class="t" style="left:1166.80px;top:630.00px;font-size:9.77px;line-height:30px;color:#2e7d32;font-weight:700;letter-spacing:-0.145px;">273<i style="display:inline-block;width:1.27px"></i>000 €</span>
<span class="t" style="left:187.80px;top:649.00px;font-size:9.12px;line-height:30px;color:#1e2535;letter-spacing:0.036px;-webkit-text-stroke:0.2px #1e2535;">Subvention BPI France</span>
<span class="t" style="left:320.50px;top:655.00px;font-size:7.14px;line-height:30px;color:#9aa5bf;letter-spacing:0.030px;">Subvention</span>
<span class="t" style="left:732.69px;top:655.00px;font-size:8.9px;line-height:30px;color:#2c3444;letter-spacing:0.613px;">50<i style="display:inline-block;width:1.42px"></i>000</span>
<span class="t" style="left:1041.69px;top:655.00px;font-size:8.9px;line-height:30px;color:#2c3444;letter-spacing:0.613px;">30<i style="display:inline-block;width:1.42px"></i>000</span>
<span class="t" style="left:1169.80px;top:655.00px;font-size:9.77px;line-height:30px;color:#2e7d32;font-weight:700;letter-spacing:0.236px;">80<i style="display:inline-block;width:1.27px"></i>000 €</span>
<div class="b" style="left:1138.00px;top:626.30px;width:125.00px;height:27.40px;border-radius:14px;background:linear-gradient(100deg,#ef9a3a 0%,#ea7038 50%,#e1544e 100%);box-shadow:0 0 9px 2px rgba(245,160,90,.45),0 2px 6px rgba(230,100,60,.25);"></div>
<div class="b" style="left:1148.90px;top:636.50px;width:7.00px;height:7.00px;border-radius:50%;background:#fff;"></div>
<svg class="i" style="left:1162.40px;top:634.30px;" width="11" height="11" viewBox="0 0 24 24" fill="none" stroke="#fff" stroke-width="1.9" stroke-linecap="round" stroke-linejoin="round"><path d="M15 14c.2-1 .7-1.700 1.500-2.500 1-.9 1.500-2.200 1.500-3.500A6 6 0 0 0 6 8c0 1 .2 2.200 1.500 3.500.7.700 1.300 1.500 1.500 2.500"/><path d="M9 18h6"/><path d="M10 22h4"/></svg>
<span class="t" style="left:1179.00px;top:625.00px;font-size:10.18px;line-height:30px;color:#fff;font-weight:700;letter-spacing:-0.201px;">Besoin d'aide ?</span>
<svg class="i" style="left:0;top:656px" width="8" height="12" viewBox="0 656 8 12"><path d="M0 660.500Q0.800 665 4.200 668H0Z" fill="#1c2a3a"/><path d="M0 660.500Q0.800 665 4.200 668" fill="none" stroke="#b9bcc4" stroke-width="1.100"/></svg>
<svg class="i" style="left:1270px;top:648px" width="10" height="20" viewBox="1270 648 10 20"><path d="M1280 651.500Q1279.600 661 1275.300 668H1280Z" fill="#16222e"/><path d="M1280 651.500Q1279.600 661 1275.300 668" fill="none" stroke="#6d737c" stroke-width=".9"/></svg>
</div></body></html>
